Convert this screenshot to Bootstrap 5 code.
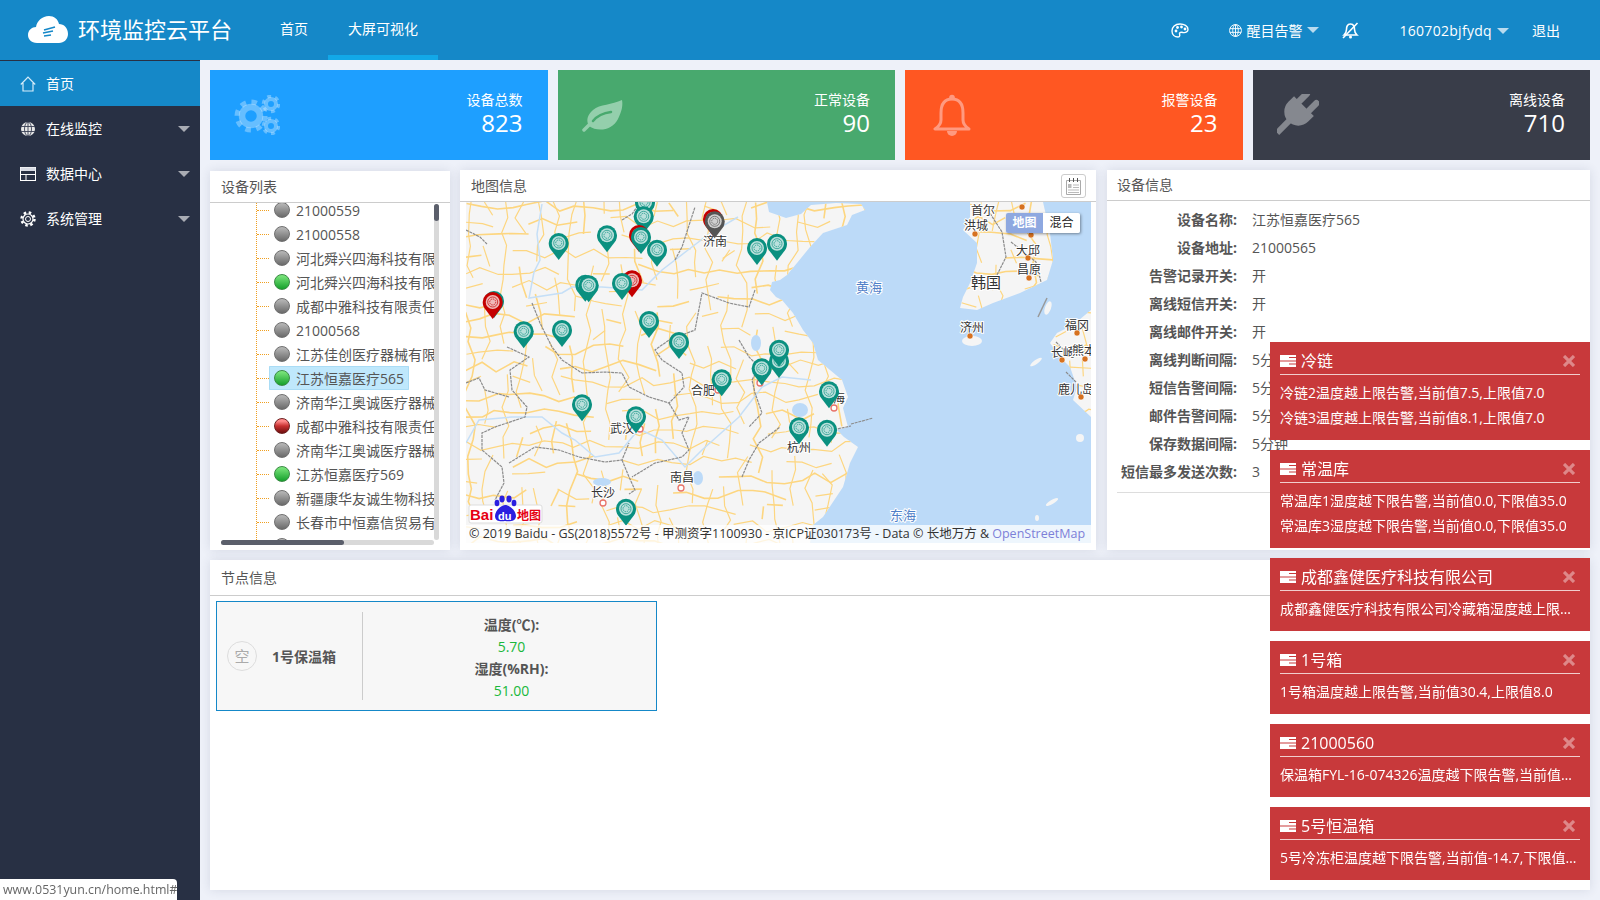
<!DOCTYPE html>
<html lang="zh-CN">

<head>
  <meta charset="UTF-8">
  <meta name="viewport" content="width=device-width, initial-scale=1.0">
  <title>环境监控云平台</title>
  <link href="https://cdn.jsdelivr.net/npm/bootstrap@5.3.0/dist/css/bootstrap.min.css" rel="stylesheet">

  <style>
    body {
      background-color: #eef1f9;
      color: #555;
      font-family: "Open Sans", "Noto Sans CJK SC", sans-serif;
      font-size: 14px;
      overflow: hidden;
    }

    .top-bar {
      height: 60px;
      background-color: #1588c8;
      color: #fff;
    }

    .brand {
      width: 260px;
      padding: 0 0 2px 28px;
      font-size: 22px;
      color: #fff;
      gap: 10px;
    }

    .top-bar .nav-link {
      height: 60px;
      padding: 0 20px;
      line-height: 58px;
      color: #fff;
    }

    .top-bar .nav-link.active {
      border-bottom: 5px solid #12a8e8;
    }

    .top-right {
      padding-right: 40px;
    }

    .top-right a {
      color: #fff;
      text-decoration: none;
    }

    .user-name {
      letter-spacing: 0.3px;
    }

    .gap-wide {
      margin-left: 40px;
    }

    .gap-mid {
      margin-left: 23px;
    }

    .dropdown-toggle::after {
      border-top: 6px solid rgba(255, 255, 255, 0.7);
      border-left: 6px solid transparent;
      border-right: 6px solid transparent;
      border-bottom: 0;
      margin-left: 5px;
      vertical-align: 2px;
    }

    .side {
      width: 200px;
      min-height: 840px;
      background-color: #283044;
      padding-top: 1px;
    }

    .side .nav-link {
      height: 45px;
      padding: 0 10px 0 20px;
      color: #fff;
      gap: 10px;
    }

    .side .nav-link.active {
      background-color: #1588c8;
    }

    .side .caret {
      margin-left: auto;
      border-top: 6px solid #a9acb4;
      border-left: 6px solid transparent;
      border-right: 6px solid transparent;
    }

    .main {
      padding: 10px;
      gap: 10px;
      min-width: 0;
    }

    .stats,
    .panels {
      gap: 10px;
    }

    .stat {
      flex: 1 1 0;
      height: 90px;
      padding: 0 25px 0 24px;
      color: #fff;
    }

    .stat-title {
      line-height: 20px;
    }

    .stat-num {
      font-size: 24px;
      line-height: 26px;
    }

    .stat-text {
      padding-bottom: 4px;
    }

    .bg-total { background-color: #1e9fff; }
    .bg-normal { background-color: #48a96e; }
    .bg-alarm { background-color: #ff5722; }
    .bg-off { background-color: #393d49; }

    .panel {
      border: 0;
      border-radius: 0;
      box-shadow: 0 0 10px rgba(40, 50, 80, 0.12);
    }

    .panel .card-header {
      background: #fff;
      border-radius: 0;
      border-bottom: 1px solid #ccc;
      padding: 0 11px;
      height: 32px;
      color: #555;
    }

    .panel-list { width: 240px; margin-top: 1px; height: 379px; }
    .panel-map { width: 636px; }
    .panels { height: 380px; }
    .panel-node .card-header { height: 36px; }
    .panel-info { margin-left: 1px; }
    .panel-info .card-header { height: 31px; padding: 0 10px 2px; }

    .tree-box {
      position: relative;
      height: 346px;
    }

    .tree-view {
      margin-left: 11px;
      width: 213px;
      height: 337px;
      overflow: hidden;
    }

    .tree {
      position: relative;
      margin: -5px 0 0;
      padding: 0;
      list-style: none;
    }

    .tree::before {
      content: "";
      position: absolute;
      left: 35px;
      top: 0;
      bottom: 0;
      border-left: 1px dotted #f0a020;
    }

    .tree li {
      height: 24px;
      padding-left: 48px;
      position: relative;
      white-space: nowrap;
      display: flex;
    }

    .tree li::before {
      content: "";
      position: absolute;
      left: 36px;
      top: 12px;
      width: 12px;
      border-top: 1px dotted #f0a020;
    }

    .tree .node {
      padding: 0 5px;
      gap: 6px;
      height: 24px;
      flex: none;
    }

    .tree .picked {
      background-color: #bfe8fc;
      box-shadow: inset 0 0 0 1px #aadcf5;
      border-radius: 1px;
    }

    .dot {
      width: 16px;
      height: 16px;
      border-radius: 50%;
      border: 1px solid #6f6f6f;
      background: linear-gradient(#b9b9b9, #6a6a6a);
      flex: none;
    }

    .dot.on {
      border-color: #3a8a44;
      background: linear-gradient(#7fe87f, #16a02c);
    }

    .dot.bad {
      border-color: #6d2020;
      background: linear-gradient(#ff8a8a 15%, #c83030 50%, #6e0f0f);
    }

    .bar-v, .bar-h {
      position: absolute;
      background: #d9d9d9;
      border-radius: 3px;
    }

    .bar-v { left: 224px; top: 1px; width: 5px; height: 336px; }
    .bar-h { left: 11px; top: 337px; width: 213px; height: 5px; }

    .bar-v i, .bar-h i {
      display: block;
      background: #5b5f6b;
      border-radius: 3px;
    }

    .bar-v i { height: 17px; }
    .bar-h i { width: 123px; height: 5px; }

    .map-btn {
      width: 25px;
      height: 24px;
      border: 1px solid #ccc;
      border-radius: 3px;
      margin-right: -1px;
    }

    .map-box {
      position: relative;
      height: 341px;
      margin: 0 5px 0 6px;
      overflow: hidden;
    }

    .map-box svg.map {
      display: block;
    }

    .map-type {
      position: absolute;
      left: 540px;
      top: 11px;
      width: 74px;
      height: 20px;
      font-size: 12px;
      line-height: 20px;
      box-shadow: 1px 1px 3px rgba(0, 0, 0, 0.4);
      border-radius: 2px;
      overflow: hidden;
    }

    .map-type span {
      width: 37px;
      text-align: center;
      background: #fff;
      color: #222;
    }

    .map-type span.on {
      background: #8ea8e0;
      color: #fff;
      font-weight: 700;
    }

    .map-copy {
      position: absolute;
      left: 0;
      right: 0;
      bottom: 0;
      height: 18px;
      padding-left: 3px;
      font-size: 12.5px;
      line-height: 18px;
      color: #333;
      background: rgba(255, 255, 255, 0.75);
      white-space: nowrap;
    }

    .map-copy a {
      color: #7d80d8;
      text-decoration: none;
    }

    .city {
      font-size: 12px;
      fill: #333;
      stroke: #fff;
      stroke-width: 2px;
      paint-order: stroke;
      text-anchor: middle;
    }

    .city.big { font-size: 15px; }
    .city.sea { font-size: 13px; fill: #4f80c8; }

    .info-body {
      padding: 5px 10px 0;
    }

    .info-row {
      height: 28px;
      line-height: 28px;
    }

    .info-label {
      width: 120px;
      text-align: right;
      font-weight: 700;
      margin-right: 15px;
    }

    .info-line {
      border-top: 1px solid #ddd;
      margin-top: 6px;
    }

    .panel-node {
      height: 330px;
    }

    .node-card {
      width: 441px;
      height: 110px;
      margin: 5px 6px;
      background: #f7f7f7;
      border: 1px solid #1588c8;
    }

    .node-left {
      width: 145px;
      padding-left: 10px;
      gap: 15px;
      font-weight: 700;
    }

    .node-sign {
      width: 30px;
      height: 30px;
      border: 1px solid #ddd;
      border-radius: 50%;
      font-size: 15px;
      color: #aaa;
      font-weight: 400;
    }

    .node-split {
      width: 1px;
      height: 88px;
      background: #ccc;
    }

    .node-right {
      line-height: 22px;
      padding: 4px 0 0 4px;
    }

    .node-right b { display: block; }
    .node-right span { display: block; color: #1ab83c; }

    .notes {
      position: fixed;
      right: 10px;
      bottom: 20px;
      width: 320px;
      gap: 10px;
      z-index: 10;
    }

    .note {
      background: #c8393b;
      color: #fff;
      padding: 8px 10px 10px;
    }

    .note-head {
      height: 25px;
      padding-bottom: 3px;
      border-bottom: 1px solid rgba(255, 255, 255, 0.75);
      font-size: 16px;
      line-height: 22px;
      gap: 5px;
    }

    .note-close {
      margin-left: auto;
      margin-right: 5px;
    }

    .note-body {
      padding-top: 5px;
      line-height: 25px;
    }

    .note-line {
      white-space: nowrap;
      overflow: hidden;
      text-overflow: ellipsis;
    }

    .status-tip {
      position: fixed;
      left: 0;
      bottom: 0;
      width: 177px;
      height: 21px;
      padding-left: 3px;
      background: #fff;
      border-radius: 0 4px 0 0;
      font-size: 12.4px;
      line-height: 21px;
      color: #666;
      white-space: nowrap;
      z-index: 20;
    }
  </style>
</head>

<body>

  <header class="top-bar d-flex align-items-center">
    <a class="brand d-flex align-items-center text-decoration-none" href="#">
      <svg width="40" height="27" viewBox="0 0 40 27">
        <path fill="#fff" d="M9 27C3 27 0 23 0 19C0 14 4 11 8 11C9 5 14 0 21 0C26 0 30 3 31 8C36 8 40 12 40 18C40 23 36 27 31 27Z" />
        <path fill="none" stroke="#1588c8" stroke-width="1.6" d="M16 14L27 11M15 17L25 15M16 20L23 19" />
      </svg>
      <span>环境监控云平台</span>
    </a>
    <ul class="nav">
      <li class="nav-item"><a class="nav-link" href="#">首页</a></li>
      <li class="nav-item"><a class="nav-link active" href="#">大屏可视化</a></li>
    </ul>
    <div class="top-right d-flex align-items-center ms-auto">
      <svg width="18" height="15" viewBox="0 0 18 15">
        <path fill="none" stroke="#fff" stroke-width="1.4" d="M9 1C4 1 1 4 1 8C1 12 4 14 7 14C9 14 9 12 8.500 11C8 9.500 10 9 12 9.500C15 10 17 8.500 17 6.500C17 3 13 1 9 1Z" />
        <circle cx="5" cy="8" r="1.400" fill="#fff" />
        <circle cx="6.500" cy="4.500" r="1.400" fill="#fff" />
        <circle cx="10.500" cy="4" r="1.400" fill="#fff" />
        <circle cx="14" cy="6" r="1.400" fill="#fff" />
      </svg>
      <a class="dropdown-toggle gap-wide d-flex align-items-center" href="#">
        <svg class="me-1" width="13" height="13" viewBox="0 0 14 14">
          <g fill="none" stroke="#fff" stroke-width="1">
            <circle cx="7" cy="7" r="6.400" />
            <ellipse cx="7" cy="7" rx="3" ry="6.400" />
            <path d="M1 5H13M1 9H13M7 .6V13.400" />
          </g>
        </svg>醒目告警</a>
      <svg class="gap-mid" width="17" height="17" viewBox="0 0 17 17">
        <g fill="none" stroke="#fff" stroke-width="1.600">
          <path d="M8.500 2C5 2 4.500 5 4.500 7.500C4.500 10 3.500 11.500 2 13H15C13.500 11.500 12.500 10 12.500 7.500C12.500 5 12 2 8.500 2Z" />
          <path d="M1 16L15.500 1" />
        </g>
        <circle cx="8.500" cy="15" r="1.500" fill="#fff" />
      </svg>
      <a class="dropdown-toggle gap-wide user-name" href="#">160702bjfydq</a>
      <a class="gap-mid" href="#">退出</a>
    </div>
  </header>

  <div class="d-flex">
    <nav class="side nav flex-column flex-shrink-0">
      <a class="nav-link active d-flex align-items-center" href="#">
        <svg width="16" height="16" viewBox="0 0 16 16">
          <path fill="none" stroke="#d5ecf9" stroke-width="1.200" d="M.8 8.500L8 1L15.200 8.500M3 7V15H13V7" />
        </svg>首页</a>
      <a class="nav-link d-flex align-items-center" href="#">
        <svg width="16" height="16" viewBox="0 0 16 16">
          <circle cx="8" cy="8" r="7" fill="#e8e8e8" />
          <g fill="none" stroke="#3a4156" stroke-width=".9">
            <ellipse cx="8" cy="8" rx="3.500" ry="7" />
            <path d="M1 5.500H15M1 10.500H15M8 1V15" />
          </g>
        </svg>在线监控<span class="caret"></span></a>
      <a class="nav-link d-flex align-items-center" href="#">
        <svg width="16" height="14" viewBox="0 0 16 14">
          <rect x=".5" y=".5" width="15" height="13" fill="none" stroke="#fff" />
          <rect x=".5" y=".5" width="15" height="3.500" fill="#d8dbe4" />
          <path fill="none" stroke="#fff" d="M.5 7.500H15.500M6 7.500V13.500" />
        </svg>数据中心<span class="caret"></span></a>
      <a class="nav-link d-flex align-items-center" href="#">
        <svg width="16" height="16" viewBox="0 0 16 16">
          <g fill="none" stroke="#fff">
            <circle cx="8" cy="8" r="2.500" />
            <circle cx="8" cy="8" r="5" stroke-width="1.200" />
            <circle cx="8" cy="8" r="6.500" stroke-width="2.400" stroke-dasharray="2.500 2.600" />
          </g>
        </svg>系统管理<span class="caret"></span></a>
    </nav>

    <main class="main flex-grow-1 d-flex flex-column">
      <div class="d-flex stats">
        <div class="stat bg-total d-flex align-items-center justify-content-between">
          <svg width="46" height="40" viewBox="0 0 46 40">
            <g fill="none" stroke="#fff" stroke-opacity=".32">
              <circle cx="17" cy="21" r="9" stroke-width="6.500" />
              <circle cx="17" cy="21" r="14" stroke-width="5" stroke-dasharray="5.500 5.500" />
              <circle cx="37" cy="9" r="5" stroke-width="4" />
              <circle cx="37" cy="9" r="7.800" stroke-width="3" stroke-dasharray="4 4.170" />
              <circle cx="37" cy="31" r="5" stroke-width="4" />
              <circle cx="37" cy="31" r="7.800" stroke-width="3" stroke-dasharray="4 4.170" />
            </g>
          </svg>
          <div class="stat-text text-end">
            <div class="stat-title">设备总数</div>
            <div class="stat-num">823</div>
          </div>
        </div>
        <div class="stat bg-normal d-flex align-items-center justify-content-between">
          <svg width="42" height="33" viewBox="0 0 42 33">
            <path fill="#94cfac" d="M40 1C30 6 18 5 11 11C5 16 4 22 7 27C15 33 30 32 36 20C40 12 41 6 40 1Z" />
            <path fill="none" stroke="#94cfac" stroke-width="3.500" stroke-linecap="round" d="M2 31L9 24" />
            <path fill="none" stroke="#48a96e" stroke-width="2.500" stroke-linecap="round" d="M11 22C15 17 21 14 29 13" />
          </svg>
          <div class="stat-text text-end">
            <div class="stat-title">正常设备</div>
            <div class="stat-num">90</div>
          </div>
        </div>
        <div class="stat bg-alarm d-flex align-items-center justify-content-between">
          <svg class="ms-1" width="38" height="42" viewBox="0 0 38 42">
            <g fill="none" stroke="#ff9a80" stroke-width="3">
              <path d="M19 5C10 5 8 12 8 19V26C8 30 5 33 2 35H36C33 33 30 30 30 26V19C30 12 28 5 19 5Z" stroke-linejoin="round" />
            </g>
            <circle cx="19" cy="3.500" r="2.800" fill="#ff9a80" />
            <path fill="#ff9a80" d="M14 37A5 5 0 0 0 24 37Z" />
          </svg>
          <div class="stat-text text-end">
            <div class="stat-title">报警设备</div>
            <div class="stat-num">23</div>
          </div>
        </div>
        <div class="stat bg-off d-flex align-items-center justify-content-between">
          <svg width="42" height="42" viewBox="0 0 42 42">
            <g fill="#85888f" transform="translate(22 17) rotate(45)">
              <rect x="-10" y="-21" width="6.500" height="17" rx="3.200" />
              <rect x="3.500" y="-21" width="6.500" height="17" rx="3.200" />
              <path d="M-14 -7H14V1A14 14 0 0 1 -14 1Z" />
              <rect x="-3" y="13" width="6" height="18" />
            </g>
          </svg>
          <div class="stat-text text-end">
            <div class="stat-title">离线设备</div>
            <div class="stat-num">710</div>
          </div>
        </div>
      </div>

      <div class="d-flex panels">
        <section class="card panel panel-list flex-shrink-0">
          <div class="card-header d-flex align-items-center">设备列表</div>
          <div class="tree-box">
            <div class="tree-view">
              <ul class="tree">
                <li><span class="node d-flex align-items-center"><i class="dot"></i>21000559</span></li>
                <li><span class="node d-flex align-items-center"><i class="dot"></i>21000558</span></li>
                <li><span class="node d-flex align-items-center"><i class="dot"></i>河北舜兴四海科技有限公司</span></li>
                <li><span class="node d-flex align-items-center"><i class="dot on"></i>河北舜兴四海科技有限公司</span></li>
                <li><span class="node d-flex align-items-center"><i class="dot"></i>成都中雅科技有限责任公司</span></li>
                <li><span class="node d-flex align-items-center"><i class="dot"></i>21000568</span></li>
                <li><span class="node d-flex align-items-center"><i class="dot"></i>江苏佳创医疗器械有限公司</span></li>
                <li><span class="node picked d-flex align-items-center"><i class="dot on"></i>江苏恒嘉医疗565</span></li>
                <li><span class="node d-flex align-items-center"><i class="dot"></i>济南华江奥诚医疗器械有限公司</span></li>
                <li><span class="node d-flex align-items-center"><i class="dot bad"></i>成都中雅科技有限责任公司</span></li>
                <li><span class="node d-flex align-items-center"><i class="dot"></i>济南华江奥诚医疗器械有限公司</span></li>
                <li><span class="node d-flex align-items-center"><i class="dot on"></i>江苏恒嘉医疗569</span></li>
                <li><span class="node d-flex align-items-center"><i class="dot"></i>新疆康华友诚生物科技有限公司</span></li>
                <li><span class="node d-flex align-items-center"><i class="dot"></i>长春市中恒嘉信贸易有限公司</span></li>
                <li><span class="node d-flex align-items-center"><i class="dot"></i></span></li>
              </ul>
            </div>
            <div class="bar-v"><i></i></div>
            <div class="bar-h"><i></i></div>
          </div>
        </section>

        <section class="card panel panel-map flex-shrink-0">
          <div class="card-header d-flex align-items-center justify-content-between">
            <span>地图信息</span>
            <div class="map-btn d-flex align-items-center justify-content-center">
              <svg width="17" height="18" viewBox="0 0 17 18">
                <path fill="none" stroke="#aaa" d="M1.500 3.500H15.500V17.500H1.500Z" />
                <path stroke="#555" d="M4.500 1V5M8.500 1V5M12.500 1V5" />
                <path stroke="#bbb" d="M8 8H14M8 10.500H14M3 13H14M3 15.500H14" />
                <rect x="3" y="7" width="3.500" height="4" fill="#bbb" />
              </svg>
            </div>
          </div>
          <div class="map-box">
            <svg class="map" id="map" width="625" height="341" viewBox="0 0 625 341">
              <defs>
                <clipPath id="landClip">
                  <path d="M0 0H301L303 10L320 16L335 12L345 3L370 1L395 2L399 8L386 13L381 23L357 31L344 45L331 61L321 73L314 78L306 80L304 88L310 95L316 98L327 111L337 128L347 141L352 158L364 168L376 178L382 195L377 206L382 225L371 228L378 235L392 245L384 261L377 285L357 315L347 323L344 341H0Z" />
                  <path d="M504 0H577L584 31L587 58L581 78L554 91L527 101L511 108L494 106L497 95L504 81L511 61L511 41L497 28L504 15Z" />
                  <path d="M625 108L607 123L591 131L584 141L594 155L604 165L611 185L607 198L625 215Z" />
                </clipPath>
                <g id="pinFace">
                  <circle cy="-17" r="7" fill="#fff" fill-opacity=".72" />
                  <circle cy="-17" r="5" fill="none" stroke="currentColor" stroke-opacity=".75" stroke-width=".9" />
                  <circle cy="-17" r="3" fill="none" stroke="currentColor" stroke-opacity=".75" stroke-width="1" stroke-dasharray="1.500 .8" />
                </g>
              </defs>
              <rect width="625" height="341" fill="#bcdaf8" />
              <g fill="#f5f5f5" clip-path="url(#landClip)">
                <rect width="625" height="341" />
              </g>
              <g fill="#f5f5f5">
                <ellipse cx="506" cy="139" rx="10" ry="5" />
                <ellipse cx="582" cy="106" rx="3" ry="7" transform="rotate(20 582 106)" />
                <ellipse cx="570" cy="160" rx="7" ry="2" transform="rotate(-35 570 160)" />
                <circle cx="614" cy="236" r="4" />
                <ellipse cx="586" cy="300" rx="7" ry="2" transform="rotate(-30 586 300)" />
                <ellipse cx="571" cy="316" rx="2" ry="3" />
              </g>
              <g id="roads" fill="none" stroke="#fdd680" clip-path="url(#landClip)"></g>
              <g fill="#bcdaf8">
                <ellipse cx="290" cy="141" rx="5" ry="8" />
                <ellipse cx="334" cy="208" rx="8" ry="7" />
                <ellipse cx="136" cy="280" rx="9" ry="4" />
                <ellipse cx="232" cy="276" rx="5" ry="7" />
              </g>
              <g fill="none" stroke="#c5dff7" stroke-width="1.500">
                <path d="M76 2L71 32L74 58L68 70L63 96L96 91L106 85L136 85L176 88L196 68L222 48L243 32L272 15" />
                <path d="M0 241L13 218L46 215L76 215L96 231L109 238L129 255L153 251L173 227L196 238L219 265L236 248L273 215L286 198L296 185L316 175L345 178" />
              </g>
              <g fill="none" stroke="#8c8c8c" stroke-width="1.200" stroke-dasharray="3 .8">
                <path d="M0 28L14 35L21 42" />
                <path d="M66 101L74 121L86 145L96 158L116 171L139 170L156 171L163 185L183 195L203 201L209 195L218 185L216 171L196 158L189 148L203 138L229 128L236 91L263 101L283 105L289 88" />
                <path d="M41 145L63 155L44 168L46 188L61 205L59 215L29 225L16 231L16 248L36 265L38 281L29 298" />
                <path d="M0 181L13 176L19 188L43 195" />
                <path d="M43 261L69 245L93 248L113 255L139 260L156 258L163 241" />
                <path d="M156 258L163 275L169 288L163 292" />
                <path d="M203 201L213 218L223 215L216 231L223 248L216 255L189 261L166 275" />
                <path d="M276 275L283 258L293 241L314 225" />
                <path d="M273 138L283 155L293 165L286 178L289 191L296 211L283 225" />
                <path d="M209 58L216 45L229 5M156 18L166 12L173 2" />
                <path d="M520 5L536 30L540 55L530 75M545 40L570 60L575 80" />
                <path d="M600 170L610 180M590 140L600 150" />
                <path d="M357 230L385 224" />
                <path d="M385 222L400 218L407 216" />
              </g>
              <path d="M581 96L572 115" stroke="#999" stroke-width="1.500" />
              <text class="city" x="249" y="44">济南</text>
              <text class="city" x="237" y="193">合肥</text>
              <text class="city" x="156" y="231">武汉</text>
              <text class="city" x="137" y="295">长沙</text>
              <text class="city" x="216" y="280">南昌</text>
              <text class="city" x="333" y="250">杭州</text>
              <text class="city" x="373" y="201">海</text>
              <text class="city big" x="520" y="86">韩国</text>
              <text class="city" x="517" y="13">首尔</text>
              <text class="city" x="510" y="28">洪城</text>
              <text class="city" x="562" y="53">大邱</text>
              <text class="city" x="563" y="72">昌原</text>
              <text class="city" x="506" y="130">济州</text>
              <text class="city" x="611" y="128">福冈</text>
              <text class="city" x="597" y="155">长崎</text>
              <text class="city" x="618" y="153">熊本</text>
              <text class="city" x="610" y="192">鹿儿岛</text>
              <text class="city sea" x="403" y="90">黄海</text>
              <text class="city sea" x="437" y="318">东海</text>
              <g fill="#d6711f" stroke="#fff" stroke-width=".5">
                <circle cx="509" cy="32" r="3" />
                <circle cx="556" cy="5" r="3" />
                <circle cx="565" cy="33" r="3" />
                <circle cx="562" cy="56" r="3" />
                <circle cx="563" cy="76" r="3" />
                <circle cx="504" cy="134" r="3" />
                <circle cx="611" cy="131" r="3" />
                <circle cx="596" cy="158" r="3" />
                <circle cx="619" cy="157" r="3" />
                <circle cx="615" cy="195" r="3" />
              </g>
              <g fill="#fff" stroke="#e8736a" stroke-width="1.300">
                <circle cx="252" cy="188" r="3" />
                <circle cx="174" cy="227" r="3" />
                <circle cx="137" cy="301" r="3" />
                <circle cx="215" cy="286" r="3" />
                <circle cx="368" cy="206" r="3" />
                <circle cx="294" cy="181" r="3" />
              </g>
              <g id="pinsTop"></g>
              <rect x="3" y="303" width="73" height="18" rx="2" fill="#fff" stroke="#ddd" />
              <text x="4" y="318" font-size="15" font-weight="700" font-family="Liberation Sans, sans-serif" fill="#e60012">Bai</text>
              <g fill="#2a1fe0">
                <ellipse cx="31" cy="301" rx="2.400" ry="3.200" />
                <ellipse cx="36" cy="297" rx="2.600" ry="3.400" />
                <ellipse cx="43" cy="297" rx="2.600" ry="3.400" />
                <ellipse cx="48" cy="301" rx="2.400" ry="3.200" />
                <path d="M39 303C35 303 29 309 29 314C29 319 34 320 39 319C44 320 50 319 50 314C50 309 44 303 39 303Z" />
              </g>
              <text x="32" y="318" font-size="11" font-weight="700" font-family="Liberation Sans, sans-serif" fill="#fff">du</text>
              <text x="51" y="318" font-size="12" font-weight="700" fill="#e60012">地图</text>
            </svg>
            <div class="map-type d-flex"><span class="on">地图</span><span>混合</span></div>
            <div class="map-copy">© 2019 Baidu - GS(2018)5572号 - 甲测资字1100930 - 京ICP证030173号 - Data © 长地万方 &amp; <a href="#">OpenStreetMap</a></div>
          </div>
        </section>

        <section class="card panel panel-info flex-grow-1">
          <div class="card-header d-flex align-items-center">设备信息</div>
          <div class="info-body">
            <div class="info-row d-flex"><span class="info-label">设备名称:</span><span>江苏恒嘉医疗565</span></div>
            <div class="info-row d-flex"><span class="info-label">设备地址:</span><span>21000565</span></div>
            <div class="info-row d-flex"><span class="info-label">告警记录开关:</span><span>开</span></div>
            <div class="info-row d-flex"><span class="info-label">离线短信开关:</span><span>开</span></div>
            <div class="info-row d-flex"><span class="info-label">离线邮件开关:</span><span>开</span></div>
            <div class="info-row d-flex"><span class="info-label">离线判断间隔:</span><span>5分钟</span></div>
            <div class="info-row d-flex"><span class="info-label">短信告警间隔:</span><span>5分钟</span></div>
            <div class="info-row d-flex"><span class="info-label">邮件告警间隔:</span><span>5分钟</span></div>
            <div class="info-row d-flex"><span class="info-label">保存数据间隔:</span><span>5分钟</span></div>
            <div class="info-row d-flex"><span class="info-label">短信最多发送次数:</span><span>3</span></div>
            <div class="info-line"></div>
          </div>
        </section>
      </div>

      <section class="card panel panel-node">
        <div class="card-header d-flex align-items-center">节点信息</div>
        <div class="node-card d-flex align-items-center">
          <div class="node-left d-flex align-items-center">
            <span class="node-sign d-flex align-items-center justify-content-center">空</span>
            <span>1号保温箱</span>
          </div>
          <div class="node-split"></div>
          <div class="node-right flex-grow-1 text-center">
            <b>温度(℃):</b>
            <span>5.70</span>
            <b>湿度(%RH):</b>
            <span>51.00</span>
          </div>
        </div>
      </section>
    </main>
  </div>

  <div class="notes d-flex flex-column" id="notes"></div>
  <div class="status-tip">www.0531yun.cn/home.html#</div>

  <script src="https://cdn.jsdelivr.net/npm/bootstrap@5.3.0/dist/js/bootstrap.bundle.min.js"></script>
  <script>
    const NS = "http://www.w3.org/2000/svg";

    // road mesh, seeded so every render is the same
    let seed = 7;
    function rnd() {
      seed = (seed * 16807) % 2147483647;
      return seed / 2147483647;
    }

    function addRoad(pts, width) {
      const p = document.createElementNS(NS, "polyline");
      p.setAttribute("points", pts.map(q => q.join(",")).join(" "));
      p.setAttribute("stroke-width", width);
      document.getElementById("roads").appendChild(p);
    }

    for (let y = 4; y < 345; y += 16) {
      let pts = [];
      for (let x = -5; x < 640; x += 16) {
        if (rnd() < 0.2 && pts.length > 1) {
          addRoad(pts, rnd() < 0.3 ? 1.6 : 1.2);
          pts = [];
          x += 16;
        }
        pts.push([x + rnd() * 6, y + (rnd() - 0.5) * 12]);
      }
      addRoad(pts, 1.2);
    }
    for (let x = 4; x < 640; x += 17) {
      let pts = [];
      for (let y = -5; y < 350; y += 16) {
        if (rnd() < 0.2 && pts.length > 1) {
          addRoad(pts, rnd() < 0.3 ? 1.6 : 1.2);
          pts = [];
          y += 16;
        }
        pts.push([x + (rnd() - 0.5) * 12, y + rnd() * 6]);
      }
      addRoad(pts, 1.2);
    }

    // map pins, [x, y of tip, colour], back to front
    const TEAL = "#0a9080", RED = "#c40000", GRAY = "#555";
    const pins = [
      [92.7, 58, TEAL], [141, 50.3, TEAL], [179, 17.3, TEAL], [177.7, 31.3, TEAL],
      [173, 50, RED], [175, 52, TEAL], [191, 64.7, TEAL],
      [247, 34, RED], [248.7, 36.3, GRAY], [291, 63, TEAL], [311, 58.7, TEAL],
      [119.3, 99.7, TEAL], [122.7, 100.3, TEAL], [166, 95.3, RED], [156, 98, TEAL],
      [28, 116, TEAL], [26.7, 117, RED], [57.7, 146.3, TEAL], [96, 145, TEAL],
      [183, 136, TEAL], [213, 157, TEAL], [255.7, 194.3, TEAL],
      [313, 176, TEAL], [313, 164.7, TEAL], [295.7, 183.3, TEAL],
      [116, 219.3, TEAL], [170, 231.3, TEAL], [160, 323.7, TEAL],
      [363, 206.3, TEAL], [333, 242.3, TEAL], [361, 244.7, TEAL]
    ];
    document.getElementById("pinsTop").innerHTML = pins.map(p =>
      `<g transform="translate(${p[0]} ${p[1]})" color="${p[2]}">
        <path fill="${p[2]}" d="M0 0L-8 -10.500C-9.500 -12.500 -10 -15 -10 -17A10 10 0 1 1 10 -17C10 -15 9.500 -12.500 8 -10.500Z"/>
        <use href="#pinFace"/>
      </g>`).join("");

    // alarm notices
    const notes = [
      ["冷链", ["冷链2温度越上限告警,当前值7.5,上限值7.0", "冷链3温度越上限告警,当前值8.1,上限值7.0"]],
      ["常温库", ["常温库1湿度越下限告警,当前值0.0,下限值35.0", "常温库3湿度越下限告警,当前值0.0,下限值35.0"]],
      ["成都鑫健医疗科技有限公司", ["成都鑫健医疗科技有限公司冷藏箱湿度越上限告警,当前值80.0"]],
      ["1号箱", ["1号箱温度越上限告警,当前值30.4,上限值8.0"]],
      ["21000560", ["保温箱FYL-16-074326温度越下限告警,当前值为1.0,下限值2.0"]],
      ["5号恒温箱", ["5号冷冻柜温度越下限告警,当前值-14.7,下限值-20.0"]]
    ];
    document.getElementById("notes").innerHTML = notes.map(n => `
      <div class="note">
        <div class="note-head d-flex align-items-center">
          <svg width="16" height="12" viewBox="0 0 16 12">
            <path fill="#fff" d="M0 0H16V5.500H0ZM0 6.500H16V12H0Z" />
            <path fill="#c8393b" d="M9 2H16V3H9ZM9 8.500H16V9.500H9Z" />
          </svg>
          <span>${n[0]}</span>
          <svg class="note-close" width="12" height="12" viewBox="0 0 12 12">
            <path stroke="#fff" stroke-opacity=".4" stroke-width="3.200" d="M1 1L11 11M11 1L1 11" />
          </svg>
        </div>
        <div class="note-body">${n[1].map(t => `<div class="note-line">${t}</div>`).join("")}</div>
      </div>`).join("");
  </script>
</body>

</html>
